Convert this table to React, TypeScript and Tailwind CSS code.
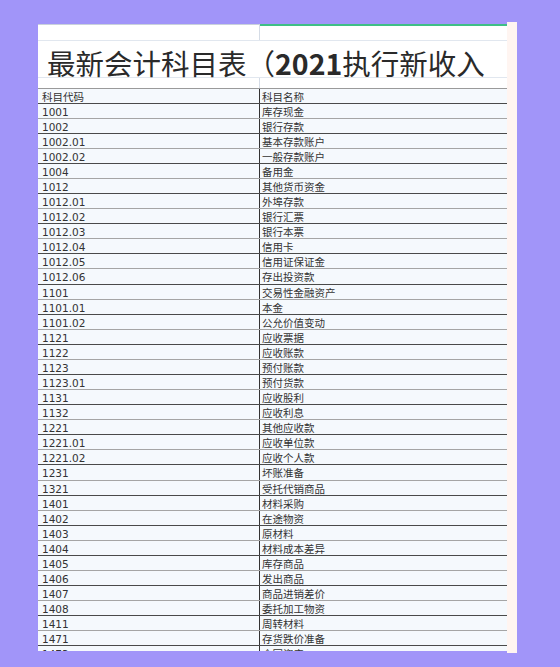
import React from "react";

const rows: [string, string][] = [
  ["科目代码", "科目名称"],
  ["1001", "库存现金"],
  ["1002", "银行存款"],
  ["1002.01", "基本存款账户"],
  ["1002.02", "一般存款账户"],
  ["1004", "备用金"],
  ["1012", "其他货币资金"],
  ["1012.01", "外埠存款"],
  ["1012.02", "银行汇票"],
  ["1012.03", "银行本票"],
  ["1012.04", "信用卡"],
  ["1012.05", "信用证保证金"],
  ["1012.06", "存出投资款"],
  ["1101", "交易性金融资产"],
  ["1101.01", "本金"],
  ["1101.02", "公允价值变动"],
  ["1121", "应收票据"],
  ["1122", "应收账款"],
  ["1123", "预付账款"],
  ["1123.01", "预付货款"],
  ["1131", "应收股利"],
  ["1132", "应收利息"],
  ["1221", "其他应收款"],
  ["1221.01", "应收单位款"],
  ["1221.02", "应收个人款"],
  ["1231", "坏账准备"],
  ["1321", "受托代销商品"],
  ["1401", "材料采购"],
  ["1402", "在途物资"],
  ["1403", "原材料"],
  ["1404", "材料成本差异"],
  ["1405", "库存商品"],
  ["1406", "发出商品"],
  ["1407", "商品进销差价"],
  ["1408", "委托加工物资"],
  ["1411", "周转材料"],
  ["1471", "存货跌价准备"],
  ["1473", "合同资产"],
];

export default function App() {
  return (
    <div className="w-[560px] h-[667px] bg-[#a195f9] overflow-hidden pl-[38px] pt-[22px]">
      <div className="flex w-[479px] h-[631px]">
        <div className="w-[469px] mt-[2px] h-[627px] bg-white overflow-hidden flex flex-col">
          {/* top empty row */}
          <div className="flex h-[17px] border-b border-[#e1e7ef] shrink-0">
            <div className="w-[222px] border-t border-[#c9d1dc] border-r border-r-[#d5dce6]"></div>
            <div className="flex-1 border-t-2 border-[#3fbf86]"></div>
          </div>
          {/* title row */}
          <div
            className="h-[37px] shrink-0 border-b border-[#e1e7ef] pl-[9px] pt-[7px] whitespace-nowrap text-[28.5px] leading-[29px] text-[#2a2a2a]"
            style={{ fontFamily: '"Noto Sans CJK SC", "Noto Sans", sans-serif' }}
          >
            最新会计科目表（<span className="font-bold">2021</span>执行新收入
          </div>
          {/* spacer row */}
          <div className="flex h-[10px] shrink-0">
            <div className="w-[222px] border-r border-[#d5dce6]"></div>
            <div className="flex-1"></div>
          </div>
          {/* table */}
          <div
            className="border-t border-[#9a9a9a] text-[10.5px] text-[#333]"
            style={{ fontFamily: '"DejaVu Sans", "Noto Sans CJK SC", sans-serif' }}
          >
            {rows.map(([code, name], i) => (
              <div
                key={i}
                className={
                  "flex shrink-0 bg-[#f5f9fd] border-b " +
                  (i === 12 || i === 25 ? "h-[16px] " : "h-[15px] ") +
                  (i % 2 === 0 ? "border-[#4a4a4a]" : "border-[#a5a5a5]")
                }
              >
                <div className="w-[222px] border-r border-[#333] pl-[4px] leading-[16px] whitespace-nowrap">
                  {code}
                </div>
                <div
                  className="flex-1 pl-[2px] leading-[16px] whitespace-nowrap text-[10.5px]"
                  style={{ fontFamily: '"Noto Sans CJK SC", sans-serif' }}
                >
                  {name}
                </div>
              </div>
            ))}
          </div>
        </div>
        <div className="w-[10px] h-[631px] bg-[#fff5f1]"></div>
      </div>
    </div>
  );
}
